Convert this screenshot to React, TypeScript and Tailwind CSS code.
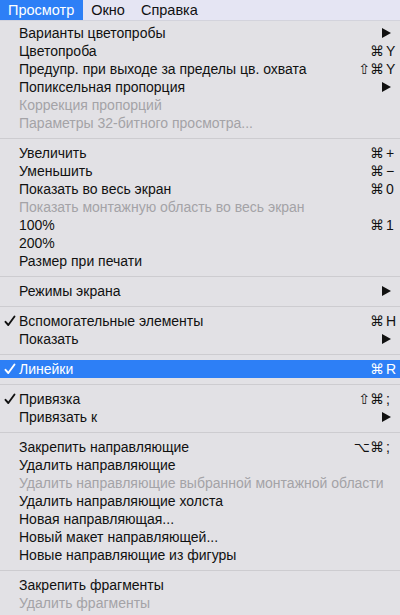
type Item =
  | { sep: true }
  | {
      sep?: false;
      label: string;
      mods?: string;
      keyChar?: string;
      sub?: boolean;
      disabled?: boolean;
      checked?: boolean;
      active?: boolean;
    };

const items: Item[] = [
  { label: 'Варианты цветопробы', sub: true },
  { label: 'Цветопроба', mods: '⌘', keyChar: 'Y' },
  { label: 'Предупр. при выходе за пределы цв. охвата', mods: '⇧⌘', keyChar: 'Y' },
  { label: 'Попиксельная пропорция', sub: true },
  { label: 'Коррекция пропорций', disabled: true },
  { label: 'Параметры 32-битного просмотра...', disabled: true },
  { sep: true },
  { label: 'Увеличить', mods: '⌘', keyChar: '+' },
  { label: 'Уменьшить', mods: '⌘', keyChar: '−' },
  { label: 'Показать во весь экран', mods: '⌘', keyChar: '0' },
  { label: 'Показать монтажную область во весь экран', disabled: true },
  { label: '100%', mods: '⌘', keyChar: '1' },
  { label: '200%' },
  { label: 'Размер при печати' },
  { sep: true },
  { label: 'Режимы экрана', sub: true },
  { sep: true },
  { label: 'Вспомогательные элементы', checked: true, mods: '⌘', keyChar: 'H' },
  { label: 'Показать', sub: true },
  { sep: true },
  { label: 'Линейки', checked: true, active: true, mods: '⌘', keyChar: 'R' },
  { sep: true },
  { label: 'Привязка', checked: true, mods: '⇧⌘', keyChar: ';' },
  { label: 'Привязать к', sub: true },
  { sep: true },
  { label: 'Закрепить направляющие', mods: '⌥⌘', keyChar: ';' },
  { label: 'Удалить направляющие' },
  { label: 'Удалить направляющие выбранной монтажной области', disabled: true },
  { label: 'Удалить направляющие холста' },
  { label: 'Новая направляющая...' },
  { label: 'Новый макет направляющей...' },
  { label: 'Новые направляющие из фигуры' },
  { sep: true },
  { label: 'Закрепить фрагменты' },
  { label: 'Удалить фрагменты', disabled: true },
];

function Check({ className }: { className: string }) {
  return (
    <svg viewBox="0 0 12 12" className={className} fill="none">
      <path
        d="M1.5 6.8 L4.3 10 L10.5 1.5"
        stroke="currentColor"
        strokeWidth="1.9"
        strokeLinecap="round"
        strokeLinejoin="round"
      />
    </svg>
  );
}

function Arrow() {
  return (
    <svg viewBox="0 0 9 10" className="w-[9px] h-[10px]">
      <path d="M0 0 L9 5 L0 10 Z" fill="#111" />
    </svg>
  );
}

export default function App() {
  return (
    <div
      className="w-[400px] h-[615px] overflow-hidden bg-[#e2e1e5] text-[14px] leading-[18px] text-[#111]"
      style={{ fontFamily: '"Liberation Sans", "DejaVu Sans", sans-serif' }}
    >
      {/* menu bar */}
      <div className="h-[21px] flex items-stretch bg-[#e5e5f3] border-b border-[#d3d3dc] text-[14.5px]">
        <div className="pl-[8px] pr-[9px] flex items-center bg-[#2d7ff6] text-white">Просмотр</div>
        <div className="pl-[8px] pr-[8px] flex items-center">Окно</div>
        <div className="px-[8px] flex items-center">Справка</div>
      </div>

      <div className="pt-[3px]">
        {items.map((it, i) => {
          if (it.sep) {
            return (
              <div key={i} className="h-[12px] pt-[6px]">
                <div className="h-px bg-[#cdccd0]" />
              </div>
            );
          }
          const color = it.active
            ? 'bg-[#2d7ff6] text-white'
            : it.disabled
              ? 'text-[#a4a3a7]'
              : 'text-[#111]';
          return (
            <div key={i} className={`h-[18px] flex items-center whitespace-nowrap ${color}`}>
              <div className="w-[19px] shrink-0 flex justify-center pl-[1px]">
                {it.checked && <Check className="w-[12px] h-[12px]" />}
              </div>
              <span className="flex-1">{it.label}</span>
              {it.sub && (
                <div className="w-[18px] flex items-center">
                  <Arrow />
                </div>
              )}
              {it.keyChar && (
                <div className="flex items-center">
                  <span className="text-right">{it.mods}</span>
                  <span className="w-[16px] pl-[2px]">{it.keyChar}</span>
                </div>
              )}
            </div>
          );
        })}
      </div>
    </div>
  );
}
